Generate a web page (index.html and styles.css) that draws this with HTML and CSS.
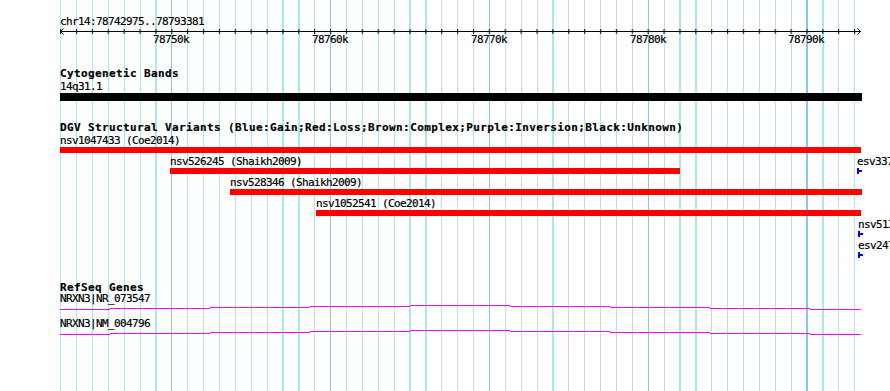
FILE: index.html
```html
<!DOCTYPE html>
<html lang="en">
<head>
    <meta charset="UTF-8">
    <meta name="viewport" content="width=device-width, initial-scale=1.0">
    <title>chr14:78742975..78793381</title>
    <link rel="stylesheet" href="styles.css">
</head>
<body>
    <!-- kb grid behind all tracks -->
    <div class="grid"></div>

    <main class="panel">
        <div class="ruler">
            <div class="ruler-name">chr14:78742975..78793381</div>
            <svg class="axis" width="802" height="7" viewBox="0 0 802 7">
                <defs>
                    <pattern id="ticks" width="15.88" height="5" patternUnits="userSpaceOnUse">
                        <rect x="0.2" y="0" width="1" height="5" fill="#000"/>
                    </pattern>
                </defs>
                <rect x="0" y="3" width="801" height="1" fill="#000"/>
                <rect x="0" y="1" width="796" height="5" fill="url(#ticks)"/>
                <polyline points="3.5,0.5 0.5,3.5 3.5,6.5" fill="none" stroke="#000" stroke-width="1"/>
                <polyline points="797.5,0.5 800.5,3.5 797.5,6.5" fill="none" stroke="#000" stroke-width="1"/>
            </svg>
            <div class="ruler-labels">
                <span class="tick-label" style="left:153px">78750k</span>
                <span class="tick-label" style="left:312px">78760k</span>
                <span class="tick-label" style="left:471px">78770k</span>
                <span class="tick-label" style="left:630px">78780k</span>
                <span class="tick-label" style="left:788px">78790k</span>
            </div>
        </div>

        <section class="track track-cyto">
            <h3 class="track-title">Cytogenetic Bands</h3>
            <div class="band-label">14q31.1</div>
            <div class="band"></div>
        </section>

        <section class="track track-dgv">
            <h3 class="track-title">DGV Structural Variants (Blue:Gain;Red:Loss;Brown:Complex;Purple:Inversion;Black:Unknown)</h3>
            <div class="rows">
                <div class="row">
                    <div class="feature" style="left:60px">
                        <div class="label">nsv1047433 (Coe2014)</div>
                        <div class="bar loss" style="width:801px"></div>
                    </div>
                </div>
                <div class="row">
                    <div class="feature" style="left:170px">
                        <div class="label">nsv526245 (Shaikh2009)</div>
                        <div class="bar loss" style="width:510px"></div>
                    </div>
                    <div class="feature" style="left:857px">
                        <div class="label">esv3372431 (Thareja2015)</div>
                        <svg class="stub" width="5" height="6"><rect x="0" y="0" width="2" height="6"/><rect x="0" y="2" width="5" height="2"/></svg>
                    </div>
                </div>
                <div class="row">
                    <div class="feature" style="left:230px">
                        <div class="label">nsv528346 (Shaikh2009)</div>
                        <div class="bar loss" style="width:632px"></div>
                    </div>
                </div>
                <div class="row">
                    <div class="feature" style="left:316px">
                        <div class="label">nsv1052541 (Coe2014)</div>
                        <div class="bar loss" style="width:545px"></div>
                    </div>
                </div>
                <div class="row">
                    <div class="feature" style="left:858px">
                        <div class="label">nsv513472 (Park2010)</div>
                        <svg class="stub" width="5" height="6"><rect x="0" y="0" width="2" height="6"/><rect x="0" y="2" width="5" height="2"/></svg>
                    </div>
                </div>
                <div class="row">
                    <div class="feature" style="left:858px">
                        <div class="label">esv2479032 (1000Genomes)</div>
                        <svg class="stub" width="5" height="6"><rect x="0" y="0" width="2" height="6"/><rect x="0" y="2" width="5" height="2"/></svg>
                    </div>
                </div>
            </div>
        </section>

        <section class="track track-genes">
            <h3 class="track-title">RefSeq Genes</h3>
            <div class="gene">
                <div class="gene-label">NRXN3|NR_073547</div>
                <svg class="intron" width="802" height="5" viewBox="0 0 802 5">
                    <rect x="0" y="4" width="50" height="1"/>
                    <rect x="50" y="3" width="100" height="1"/>
                    <rect x="150" y="2" width="100" height="1"/>
                    <rect x="250" y="1" width="100" height="1"/>
                    <rect x="350" y="0" width="100" height="1"/>
                    <rect x="450" y="1" width="100" height="1"/>
                    <rect x="550" y="2" width="100" height="1"/>
                    <rect x="650" y="3" width="100" height="1"/>
                    <rect x="750" y="4" width="51" height="1"/>
                </svg>
            </div>
            <div class="gene">
                <div class="gene-label">NRXN3|NM_004796</div>
                <svg class="intron" width="802" height="5" viewBox="0 0 802 5">
                    <rect x="0" y="4" width="50" height="1"/>
                    <rect x="50" y="3" width="100" height="1"/>
                    <rect x="150" y="2" width="100" height="1"/>
                    <rect x="250" y="1" width="100" height="1"/>
                    <rect x="350" y="0" width="100" height="1"/>
                    <rect x="450" y="1" width="100" height="1"/>
                    <rect x="550" y="2" width="100" height="1"/>
                    <rect x="650" y="3" width="100" height="1"/>
                    <rect x="750" y="4" width="51" height="1"/>
                </svg>
            </div>
        </section>
    </main>
</body>
</html>
```

FILE: styles.css
```css
body {
    margin: 0;
    width: 890px;
    height: 391px;
    overflow: hidden;
    position: relative;
    background: #fff;
    color: #000;
    font-family: "DejaVu Sans Mono", monospace;
    font-size: 11px;
    line-height: 12px;
    letter-spacing: -0.62px;
    -webkit-text-stroke: 0.2px #000;
}
/* minor lines every 1kb, major every 10kb */
.grid {
    position: absolute;
    top: 0;
    bottom: 0;
    left: 60px;
    width: 796px;
    z-index: 0;
    background-image:
        repeating-linear-gradient(90deg, transparent 0 111.2px, #86c8ea 111.2px 112.4px, transparent 112.4px 158.8px),
        repeating-linear-gradient(90deg, transparent 0 0.1px, #a8e8ee 0.1px 1.3px, transparent 1.3px 15.88px);
}
.panel {
    position: relative;
    z-index: 1;
}
.ruler-name {
    margin-top: 16px;
    padding-left: 60px;
}
.axis {
    display: block;
    margin-left: 60px;
}
.ruler-labels {
    position: relative;
    height: 12px;
    margin-top: -1px;
}
.tick-label {
    position: absolute;
    top: 0;
}
.track-title {
    margin: 0;
    padding-left: 60px;
    font-size: 11px;
    font-weight: bold;
    line-height: 12px;
    letter-spacing: 0.38px;
    white-space: nowrap;
}
.track-cyto {
    margin-top: 22px;
}
.band-label {
    margin-top: 1px;
    padding-left: 60px;
}
.band {
    margin-left: 60px;
    width: 802px;
    height: 8px;
    background: #000;
}
.track-dgv {
    margin-top: 21px;
}
.rows {
    margin-top: 1px;
}
.row {
    position: relative;
    height: 21px;
}
.feature {
    position: absolute;
    top: 0;
}
.label {
    white-space: nowrap;
}
.bar {
    height: 6px;
}
.bar.loss {
    background: #ff0000;
}
.stub {
    display: block;
    fill: #0000ff;
}
.track-genes {
    margin-top: 21px;
}
.track-genes .track-title {
    line-height: 11px;
}
.gene {
    height: 25px;
}
.gene-label {
    padding-left: 60px;
    line-height: 11px;
}
.intron {
    display: block;
    margin-top: 1px;
    margin-left: 60px;
    fill: #ff00ff;
}
```
